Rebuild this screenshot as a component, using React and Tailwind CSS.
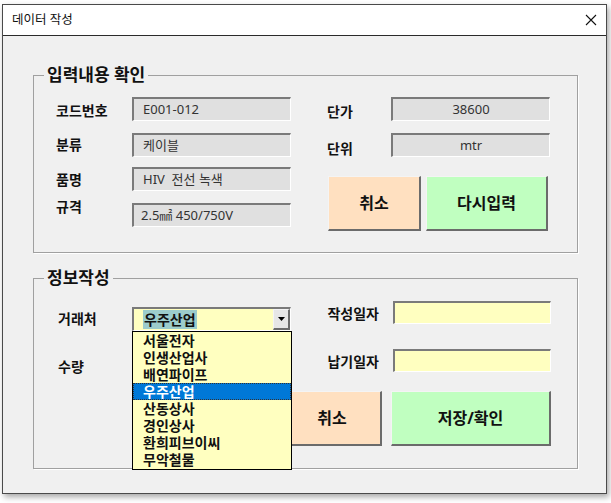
import React from 'react';

const sunken = 'border-t-2 border-l-2 border-b border-r border-t-[#7a7a7a] border-l-[#7a7a7a] border-b-white border-r-white';
const raised = 'border-t border-l border-b-2 border-r-2 border-t-[#f4f4f4] border-l-[#f4f4f4] border-b-[#6b6b6b] border-r-[#6b6b6b]';

function Label({ children, className = '' }) {
    return <div className={`shrink-0 text-[14px] leading-[20px] font-bold text-[#111] ${className}`}>{children}</div>;
}

function Field({ children, className = '' }) {
    return (
        <div className={`shrink-0 h-[24px] w-[159px] bg-[#e0e0e0] text-[13px] text-[#333] flex items-center ${sunken} ${className}`}>
            {children}
        </div>
    );
}

function Button({ children, className = '' }) {
    return (
        <div className={`shrink-0 h-[55px] flex items-center justify-center text-[16px] font-bold text-[#111] ${raised} ${className}`}>
            {children}
        </div>
    );
}

const clients = ['서울전자', '인생산업사', '배연파이프', '우주산업', '산동상사', '경인상사', '환희피브이씨', '무악철물'];

export default function App() {
    return (
        <div className="w-[611px] h-[503px] bg-white pt-[4px] pl-[2px] font-['Noto_Sans','Noto_Sans_CJK_KR',sans-serif] overflow-hidden">
            <div className="w-[605px] h-[490px] border border-[#4a4a4a] flex flex-col shadow-[2px_3px_6px_rgba(0,0,0,0.35)]">
                <div className="h-[31px] bg-white border-b border-[#2a2a2a] flex items-center pl-[9px] pr-[9px]">
                    <span className="text-[12.5px] text-[#111]">데이터 작성</span>
                    <svg className="ml-auto" width="12" height="12" viewBox="0 0 12 12">
                        <path d="M1 1 L11 11 M11 1 L1 11" stroke="#111" strokeWidth="1.1" fill="none" />
                    </svg>
                </div>
                <div className="flex-1 bg-[#f0f0f0] pl-[30px] pt-[28px]">
                    <fieldset className="w-[545px] h-[189px] border border-[#a0a0a0] shadow-[1px_1px_0_#fff] p-0 m-0">
                        <legend className="ml-[10px] px-[3px] text-[17px] leading-[22px] font-bold text-[#111]">입력내용 확인</legend>
                        <div className="mt-[11px] pl-[22px] flex items-start">
                            <div className="w-[235px] flex flex-col">
                                <div className="flex items-start">
                                    <Label className="w-[76px] mt-[4px]">코드번호</Label>
                                    <Field className="pl-[9px]">E001-012</Field>
                                </div>
                                <div className="flex items-start mt-[12px]">
                                    <Label className="w-[76px] mt-[2px]">분류</Label>
                                    <Field className="pl-[9px]">케이블</Field>
                                </div>
                                <div className="flex items-start mt-[10px]">
                                    <Label className="w-[76px] mt-[3px]">품명</Label>
                                    <Field className="pl-[9px]">HIV&nbsp;&nbsp;전선 녹색</Field>
                                </div>
                                <div className="flex items-start mt-[12px]">
                                    <Label className="w-[76px] -mt-[6px]">규격</Label>
                                    <Field className="pl-[7px]">2.5㎟ 450/750V</Field>
                                </div>
                            </div>
                            <div className="ml-[36px] flex flex-col">
                                <div className="flex items-start">
                                    <Label className="w-[64px] mt-[5px]">단가</Label>
                                    <Field className="justify-center">38600</Field>
                                </div>
                                <div className="flex items-start mt-[11px]">
                                    <Label className="w-[64px] mt-[6px]">단위</Label>
                                    <Field className="justify-center">mtr</Field>
                                </div>
                                <div className="flex mt-[17px] ml-[1px] gap-[5px]">
                                    <Button className="w-[93px] bg-[#ffe0c0]">취소</Button>
                                    <Button className="w-[122px] bg-[#c0ffc0]">다시입력</Button>
                                </div>
                            </div>
                        </div>
                    </fieldset>

                    <fieldset className="mt-[14px] w-[545px] h-[202px] border border-[#a0a0a0] shadow-[1px_1px_0_#fff] p-0 m-0">
                        <legend className="ml-[10px] px-[3px] text-[17px] leading-[22px] font-bold text-[#111]">정보작성</legend>
                        <div className="flex items-start">
                            <div className="w-[249px] shrink-0 pl-[24px] flex flex-col">
                                <div className="mt-[18px] flex items-center">
                                    <Label className="w-[74px]">거래처</Label>
                                    <div className="relative z-10 shrink-0 w-[159px] h-[24px]">
                                        <div className={`h-full bg-[#ffffc0] flex items-stretch ${sunken}`}>
                                            <div className="flex items-center pl-[9px]">
                                                <span className="bg-[#9ccccc] px-[1px] text-[14px] leading-[19px] font-bold text-[#111]">우주산업</span>
                                            </div>
                                            <div className={`ml-auto w-[17px] bg-[#e6e6e6] flex items-center justify-center ${raised}`}>
                                                <svg width="7" height="4" viewBox="0 0 7 4">
                                                    <path d="M0 0 H7 L3.5 4 Z" fill="#000" />
                                                </svg>
                                            </div>
                                        </div>
                                        <div className="absolute left-0 top-full w-[160px] h-[139px] border border-black bg-[#ffffc0] flex flex-col">
                                            {clients.map((c) => (
                                                <div
                                                    key={c}
                                                    className={
                                                        c === '우주산업'
                                                            ? 'h-[17px] leading-[15px] pl-[9px] text-[14px] font-bold bg-[#0078d7] text-white border border-dotted border-[#333]'
                                                            : 'h-[17px] leading-[17px] pl-[10px] text-[14px] font-bold text-[#111]'
                                                    }
                                                >
                                                    {c}
                                                </div>
                                            ))}
                                        </div>
                                    </div>
                                </div>
                                <Label className="mt-[26px]">수량</Label>
                            </div>
                            <div className="flex flex-col">
                                <div className="mt-[12px] flex items-start">
                                    <Label className="w-[96px] text-right mt-[3px]">작성일자</Label>
                                    <div className={`ml-[14px] w-[158px] h-[23px] bg-[#ffffc0] ${sunken}`} />
                                </div>
                                <div className="mt-[25px] flex items-start">
                                    <Label className="w-[96px] text-right mt-[3px]">납기일자</Label>
                                    <div className={`ml-[14px] w-[158px] h-[23px] bg-[#ffffc0] ${sunken}`} />
                                </div>
                                <div className="mt-[19px] flex gap-[9px]">
                                    <Button className="w-[99px] bg-[#ffe0c0]">취소</Button>
                                    <Button className="w-[160px] bg-[#c0ffc0]">저장/확인</Button>
                                </div>
                            </div>
                        </div>
                    </fieldset>
                </div>
            </div>
        </div>
    );
}
